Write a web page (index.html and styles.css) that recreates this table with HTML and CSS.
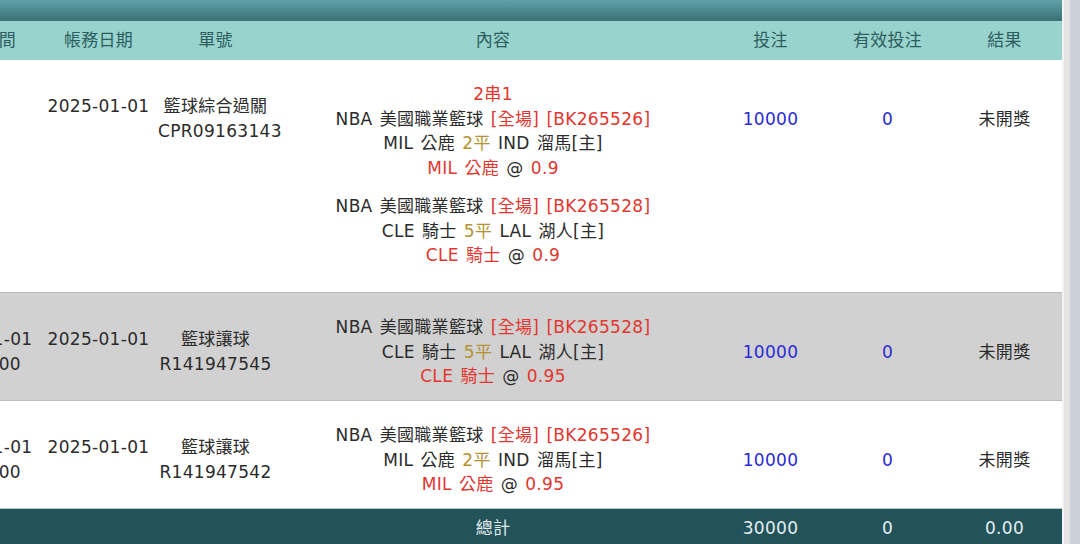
FILE: index.html
```html
<!DOCTYPE html>
<html>
<head lang="zh-Hant">
    <meta charset="UTF-8">
    <title>下注記錄</title>
    <link rel="stylesheet" href="styles.css">
</head>
<body>
<div class="page">
    <div class="main">
        <div class="topbar"></div>
        <div class="scroller">
            <table class="records">
                <colgroup>
                    <col class="c-std">
                    <col class="c-std">
                    <col class="c-std">
                    <col class="c-content">
                    <col class="c-std">
                    <col class="c-std">
                    <col class="c-std">
                </colgroup>
                <thead>
                <tr>
                    <th>下注時間</th>
                    <th>帳務日期</th>
                    <th>單號</th>
                    <th>內容</th>
                    <th>投注</th>
                    <th>有效投注</th>
                    <th>結果</th>
                </tr>
                </thead>
                <tbody>
                <!-- parlay -->
                <tr class="row-parlay">
                    <td><div class="mid"></div></td>
                    <td><div class="mid">2025-01-01<br>&nbsp;</div></td>
                    <td><div class="mid">籃球綜合過關<br>CPR09163143</div></td>
                    <td>
                        <div class="red">2串1</div>
                        <div class="leg">
                            <div>NBA 美國職業籃球 <span class="red">[全場] [BK265526]</span></div>
                            <div>MIL 公鹿 <span class="olive">2平</span> IND 溜馬[主]</div>
                            <div><span class="red">MIL 公鹿</span> @ <span class="red">0.9</span></div>
                        </div>
                        <div class="leg">
                            <div>NBA 美國職業籃球 <span class="red">[全場] [BK265528]</span></div>
                            <div>CLE 騎士 <span class="olive">5平</span> LAL 湖人[主]</div>
                            <div><span class="red">CLE 騎士</span> @ <span class="red">0.9</span></div>
                        </div>
                    </td>
                    <td><div class="mid blue">10000</div></td>
                    <td><div class="mid blue">0</div></td>
                    <td><div class="mid">未開獎</div></td>
                </tr>
                <tr class="row-alt">
                    <td>2025-01-01<br>12:30:00</td>
                    <td>2025-01-01<br>&nbsp;</td>
                    <td>籃球讓球<br>R141947545</td>
                    <td>
                        <div>NBA 美國職業籃球 <span class="red">[全場] [BK265528]</span></div>
                        <div>CLE 騎士 <span class="olive">5平</span> LAL 湖人[主]</div>
                        <div><span class="red">CLE 騎士</span> @ <span class="red">0.95</span></div>
                    </td>
                    <td class="blue">10000</td>
                    <td class="blue">0</td>
                    <td>未開獎</td>
                </tr>
                <tr>
                    <td>2025-01-01<br>12:30:00</td>
                    <td>2025-01-01<br>&nbsp;</td>
                    <td>籃球讓球<br>R141947542</td>
                    <td>
                        <div>NBA 美國職業籃球 <span class="red">[全場] [BK265526]</span></div>
                        <div>MIL 公鹿 <span class="olive">2平</span> IND 溜馬[主]</div>
                        <div><span class="red">MIL 公鹿</span> @ <span class="red">0.95</span></div>
                    </td>
                    <td class="blue">10000</td>
                    <td class="blue">0</td>
                    <td>未開獎</td>
                </tr>
                </tbody>
                <tfoot>
                <tr>
                    <td></td>
                    <td></td>
                    <td></td>
                    <td>總計</td>
                    <td>30000</td>
                    <td>0</td>
                    <td>0.00</td>
                </tr>
                </tfoot>
            </table>
        </div>
    </div>
    <div class="gutter"></div>
    <div class="rail"></div>
</div>
</body>
</html>
```

FILE: styles.css
```css
body, html {
    margin: 0;
    height: 100%;
    width: 100%;
    overflow: hidden;
}

body {
    font-family: "DejaVu Sans", "Noto Sans CJK TC", sans-serif;
    font-size: 17px;
    line-height: 24.7px;
    letter-spacing: 0.3px;
    word-spacing: 1.5px;
    color: #2b2b2b;
    background-color: #ccd1d9;
}

.page {
    display: flex;
    height: 100%;
}

.main {
    width: 1062px;
    flex: none;
    background-color: #fff;
}

.topbar {
    height: 21px;
    background: linear-gradient(#5ea2a8, #3a6f75);
}

/* table is scrolled sideways, first column partly hidden */
.scroller {
    overflow: hidden;
}

.records {
    border-collapse: collapse;
    table-layout: fixed;
    width: 1140px;
    margin-left: -77px;
}

.c-std {
    width: 117px;
}

.c-content {
    width: 438px;
}

.records th {
    height: 39px;
    padding: 0 1px;
    background-color: #98d4cd;
    color: #2d5d5e;
    font-weight: normal;
    text-align: center;
    vertical-align: middle;
}

.records td {
    padding: 22px 1px 11px;
    text-align: center;
    vertical-align: middle;
    white-space: nowrap;
}

.records tbody tr + tr {
    border-top: 1px solid #bcbcbc;
}

.records .row-alt {
    background-color: #d1d1d1;
}

.row-parlay td {
    vertical-align: top;
}

.row-parlay .mid {
    min-height: 74px;
    display: flex;
    flex-direction: column;
    justify-content: center;
}

.row-parlay .leg {
    margin-bottom: 13px;
}

.records tfoot tr {
    border-top: 1px solid #b9c6c6;
    background-color: #22525a;
    color: #e4eeee;
}

.records tfoot td {
    padding: 7px 1px 12px;
}

.red {
    color: #e2362f;
}

.olive {
    color: #b49232;
}

.blue {
    color: #2a2ad6;
}

.gutter {
    width: 6px;
    flex: none;
    background-color: #e3e3e3;
    border-left: 2px solid #f3f3f3;
}

.rail {
    flex: 1;
    background-color: #ccd1d9;
}
```
